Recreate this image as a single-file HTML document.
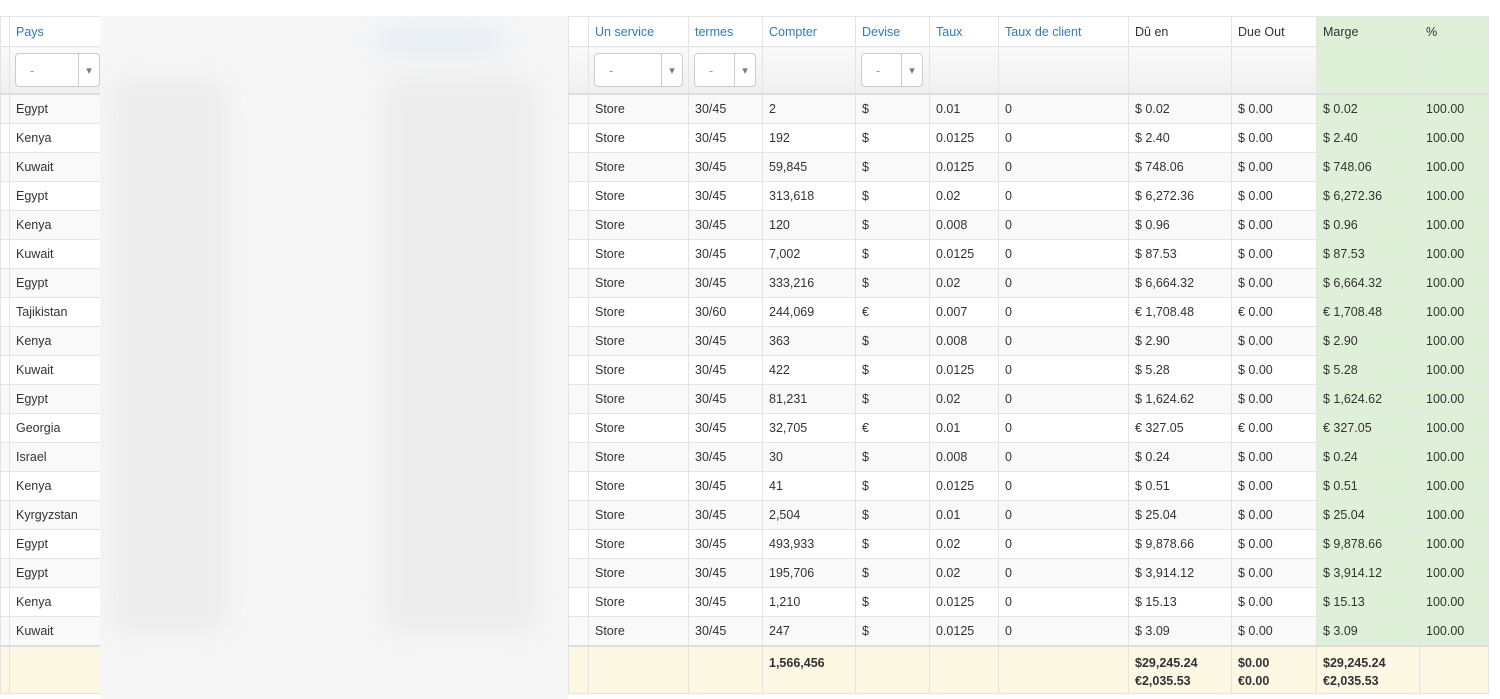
<!DOCTYPE html>
<html><head><meta charset="utf-8"><style>
body{margin:0;background:#fff;width:1500px;height:699px;overflow:hidden;position:relative;font-family:"Liberation Sans",sans-serif;font-size:12.5px;color:#333}
table{position:absolute;left:0;top:16px;border-collapse:collapse;table-layout:fixed;width:1488px}
td,th{border:1px solid #e4e4e4;padding:0 6px;height:28px;white-space:nowrap;overflow:hidden;text-align:left;font-weight:normal}
th{height:29px;color:#337ab7}
th.k{color:#333}
tr.f td{height:46px;background:linear-gradient(#fafafa,#efefef);border-bottom:2px solid #ddd}
tbody tr:nth-child(odd) td{background:#f9f9f9}
tbody tr:nth-child(even) td{background:#fff}
tbody tr td.g,th.g,tr.f td.g{background:#dff0d8!important}
tfoot td{background:#fcf8e3;height:39px;vertical-align:top;padding-top:7px;font-weight:bold;line-height:18px;border-top:2px solid #ddd}
.sel{width:85px;height:34px;border:1px solid #ccc;border-radius:4px;background:#fff;position:relative;color:#999;line-height:34px;padding-left:14px;box-sizing:border-box}
.sel:after{content:"▾";position:absolute;right:0;top:0;width:20px;border-left:1px solid #ccc;text-align:center;font-size:11px;color:#777;height:32px}
.blur{position:absolute;left:100px;top:16px;width:468px;height:683px;background:#f7f7f7;overflow:hidden}
.blur div{position:absolute;background:#ececec;filter:blur(14px);border-radius:20px}
</style></head><body>
<table>
<colgroup><col style="width:9px"><col style="width:91px"><col style="width:468px"><col style="width:20px"><col style="width:100px"><col style="width:74px"><col style="width:93px"><col style="width:74px"><col style="width:69px"><col style="width:130px"><col style="width:103px"><col style="width:85px"><col style="width:103px"><col style="width:69px"></colgroup>
<thead><tr><th></th><th>Pays</th><th></th><th></th><th>Un service</th><th>termes</th><th>Compter</th><th>Devise</th><th>Taux</th><th>Taux de client</th><th class="k">Dû en</th><th class="k">Due Out</th><th class="k g">Marge</th><th class="k g">%</th></tr>
<tr class="f"><td></td><td style="padding-left:5px"><div class="sel">-</div></td><td></td><td></td><td style="padding-left:5px"><div class="sel" style="width:89px">-</div></td><td style="padding-left:5px"><div class="sel" style="width:62px">-</div></td><td></td><td style="padding-left:5px"><div class="sel" style="width:62px">-</div></td><td></td><td></td><td></td><td></td><td class="g"></td><td class="g"></td></tr></thead>
<tbody>
<tr><td></td><td>Egypt</td><td></td><td></td><td>Store</td><td>30/45</td><td>2</td><td>$</td><td>0.01</td><td>0</td><td>$ 0.02</td><td>$ 0.00</td><td class="g">$ 0.02</td><td class="g">100.00</td></tr>
<tr><td></td><td>Kenya</td><td></td><td></td><td>Store</td><td>30/45</td><td>192</td><td>$</td><td>0.0125</td><td>0</td><td>$ 2.40</td><td>$ 0.00</td><td class="g">$ 2.40</td><td class="g">100.00</td></tr>
<tr><td></td><td>Kuwait</td><td></td><td></td><td>Store</td><td>30/45</td><td>59,845</td><td>$</td><td>0.0125</td><td>0</td><td>$ 748.06</td><td>$ 0.00</td><td class="g">$ 748.06</td><td class="g">100.00</td></tr>
<tr><td></td><td>Egypt</td><td></td><td></td><td>Store</td><td>30/45</td><td>313,618</td><td>$</td><td>0.02</td><td>0</td><td>$ 6,272.36</td><td>$ 0.00</td><td class="g">$ 6,272.36</td><td class="g">100.00</td></tr>
<tr><td></td><td>Kenya</td><td></td><td></td><td>Store</td><td>30/45</td><td>120</td><td>$</td><td>0.008</td><td>0</td><td>$ 0.96</td><td>$ 0.00</td><td class="g">$ 0.96</td><td class="g">100.00</td></tr>
<tr><td></td><td>Kuwait</td><td></td><td></td><td>Store</td><td>30/45</td><td>7,002</td><td>$</td><td>0.0125</td><td>0</td><td>$ 87.53</td><td>$ 0.00</td><td class="g">$ 87.53</td><td class="g">100.00</td></tr>
<tr><td></td><td>Egypt</td><td></td><td></td><td>Store</td><td>30/45</td><td>333,216</td><td>$</td><td>0.02</td><td>0</td><td>$ 6,664.32</td><td>$ 0.00</td><td class="g">$ 6,664.32</td><td class="g">100.00</td></tr>
<tr><td></td><td>Tajikistan</td><td></td><td></td><td>Store</td><td>30/60</td><td>244,069</td><td>€</td><td>0.007</td><td>0</td><td>€ 1,708.48</td><td>€ 0.00</td><td class="g">€ 1,708.48</td><td class="g">100.00</td></tr>
<tr><td></td><td>Kenya</td><td></td><td></td><td>Store</td><td>30/45</td><td>363</td><td>$</td><td>0.008</td><td>0</td><td>$ 2.90</td><td>$ 0.00</td><td class="g">$ 2.90</td><td class="g">100.00</td></tr>
<tr><td></td><td>Kuwait</td><td></td><td></td><td>Store</td><td>30/45</td><td>422</td><td>$</td><td>0.0125</td><td>0</td><td>$ 5.28</td><td>$ 0.00</td><td class="g">$ 5.28</td><td class="g">100.00</td></tr>
<tr><td></td><td>Egypt</td><td></td><td></td><td>Store</td><td>30/45</td><td>81,231</td><td>$</td><td>0.02</td><td>0</td><td>$ 1,624.62</td><td>$ 0.00</td><td class="g">$ 1,624.62</td><td class="g">100.00</td></tr>
<tr><td></td><td>Georgia</td><td></td><td></td><td>Store</td><td>30/45</td><td>32,705</td><td>€</td><td>0.01</td><td>0</td><td>€ 327.05</td><td>€ 0.00</td><td class="g">€ 327.05</td><td class="g">100.00</td></tr>
<tr><td></td><td>Israel</td><td></td><td></td><td>Store</td><td>30/45</td><td>30</td><td>$</td><td>0.008</td><td>0</td><td>$ 0.24</td><td>$ 0.00</td><td class="g">$ 0.24</td><td class="g">100.00</td></tr>
<tr><td></td><td>Kenya</td><td></td><td></td><td>Store</td><td>30/45</td><td>41</td><td>$</td><td>0.0125</td><td>0</td><td>$ 0.51</td><td>$ 0.00</td><td class="g">$ 0.51</td><td class="g">100.00</td></tr>
<tr><td></td><td>Kyrgyzstan</td><td></td><td></td><td>Store</td><td>30/45</td><td>2,504</td><td>$</td><td>0.01</td><td>0</td><td>$ 25.04</td><td>$ 0.00</td><td class="g">$ 25.04</td><td class="g">100.00</td></tr>
<tr><td></td><td>Egypt</td><td></td><td></td><td>Store</td><td>30/45</td><td>493,933</td><td>$</td><td>0.02</td><td>0</td><td>$ 9,878.66</td><td>$ 0.00</td><td class="g">$ 9,878.66</td><td class="g">100.00</td></tr>
<tr><td></td><td>Egypt</td><td></td><td></td><td>Store</td><td>30/45</td><td>195,706</td><td>$</td><td>0.02</td><td>0</td><td>$ 3,914.12</td><td>$ 0.00</td><td class="g">$ 3,914.12</td><td class="g">100.00</td></tr>
<tr><td></td><td>Kenya</td><td></td><td></td><td>Store</td><td>30/45</td><td>1,210</td><td>$</td><td>0.0125</td><td>0</td><td>$ 15.13</td><td>$ 0.00</td><td class="g">$ 15.13</td><td class="g">100.00</td></tr>
<tr><td></td><td>Kuwait</td><td></td><td></td><td>Store</td><td>30/45</td><td>247</td><td>$</td><td>0.0125</td><td>0</td><td>$ 3.09</td><td>$ 0.00</td><td class="g">$ 3.09</td><td class="g">100.00</td></tr>
</tbody>
<tfoot><tr><td></td><td></td><td></td><td></td><td></td><td></td><td>1,566,456</td><td></td><td></td><td></td><td>$29,245.24<br>€2,035.53</td><td>$0.00<br>€0.00</td><td>$29,245.24<br>€2,035.53</td><td></td></tr></tfoot>
</table>
<div class="blur">
<div style="left:10px;top:60px;width:120px;height:560px"></div>
<div style="left:280px;top:60px;width:160px;height:560px"></div>
<div style="left:270px;top:10px;width:140px;height:30px;background:#e6ecf3"></div>
</div>
</body></html>
